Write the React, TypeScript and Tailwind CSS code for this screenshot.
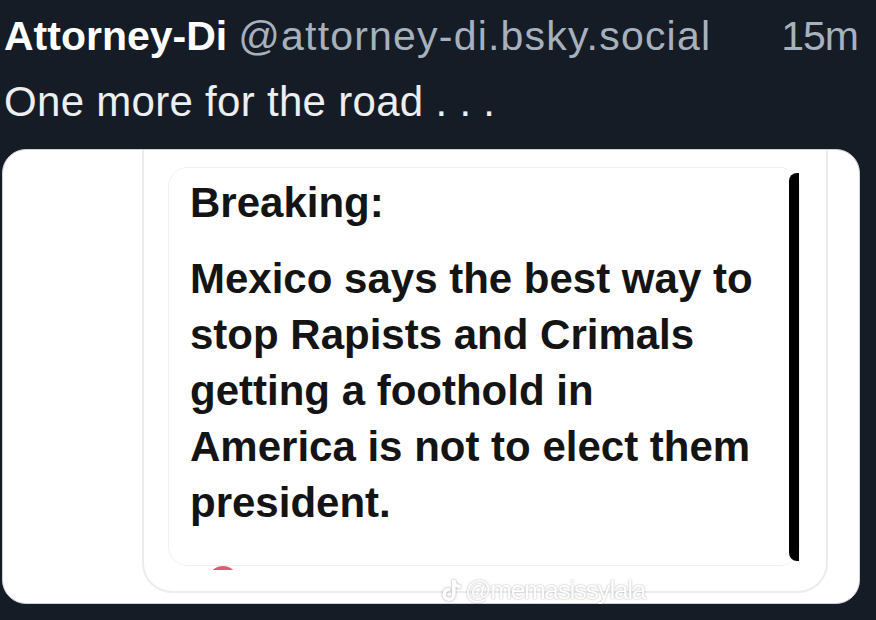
import { FaTiktok } from "react-icons/fa";

const lines = [
  "Mexico says the best way to",
  "stop Rapists and Crimals",
  "getting a foothold in",
  "America is not to elect them",
  "president.",
];

export default function App() {
  return (
    <div className="w-[876px] h-[620px] overflow-hidden bg-[#151c26] font-['Liberation_Sans',Arial,sans-serif]">
      <div className="flex items-baseline pl-[4px] pr-[18px] pt-[12px] leading-[48px] text-[41px]">
        <span className="font-bold text-white">Attorney-Di</span>
        <span className="ml-[11px] tracking-[1.2px] text-[#a6b1bd]">@attorney-di.bsky.social</span>
        <span className="ml-auto tracking-[-1px] text-[#a6b1bd]">15m</span>
      </div>
      <p className="mt-[14px] pl-[4px] text-[42px] tracking-[0.3px] leading-[56px] text-[#eceef0]">One more for the road . . .</p>

      <div className="relative mt-[19px] ml-[2px] w-[858px] h-[455px] rounded-[24px] border border-[#c9d1d9] bg-white pl-[139px]">
        <div className="w-[686px] h-[443px] rounded-b-[30px] border-2 border-t-0 border-[#ececec] pl-[24px] pt-[17px]">
          <div className="flex w-[632px] h-[399px] rounded-[20px] border border-[#f1f1f1]">
            <div className="flex-1 pl-[21px] pt-[7px] text-[42px] font-bold leading-[56px] text-[#141414]">
              <p>Breaking:</p>
              <p className="mt-[20px]">
                {lines.map((l) => (
                  <span key={l} className="block">{l}</span>
                ))}
              </p>
            </div>
            <div className="mt-[5px] mb-[4px] w-[10px] rounded-l-[8px] bg-black" />
          </div>
          <div className="ml-[40px] h-[4px] w-[30px] overflow-hidden">
            <div className="h-[30px] w-[30px] rounded-full bg-[#e05a78]" />
          </div>
        </div>

        <div className="absolute left-[438px] top-[428px] flex items-center gap-[3px] text-[26px] leading-[24px] tracking-[-1.2px] text-white [text-shadow:0_0_2px_rgba(0,0,0,0.35)]">
          <FaTiktok className="h-[21px] w-[21px] drop-shadow-[0_0_1px_rgba(0,0,0,0.4)]" />
          <span>@memasissylala</span>
        </div>
      </div>
    </div>
  );
}
